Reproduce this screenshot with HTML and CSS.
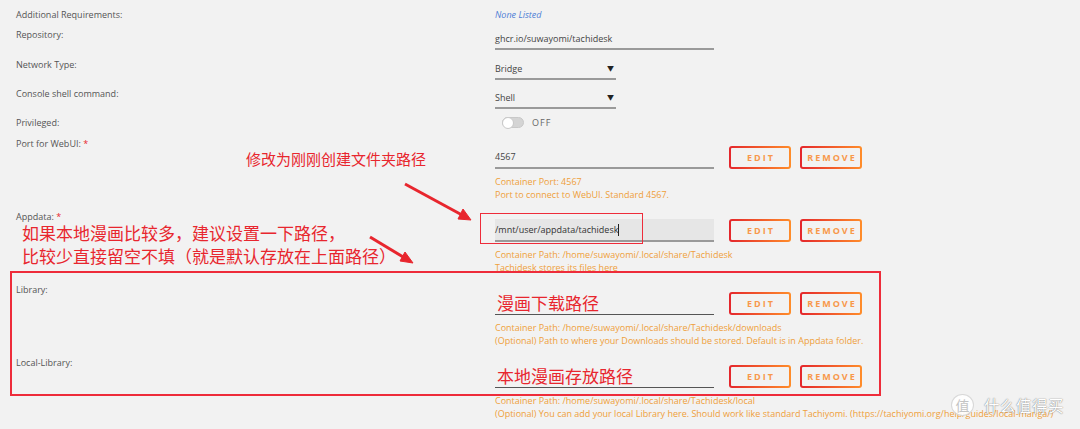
FILE: index.html
```html
<!DOCTYPE html>
<html lang="en">
  <head>
    <meta charset="UTF-8">
    <meta name="viewport" content="width=device-width, initial-scale=1.0">
    <title>Tachidesk - Edit Container</title>
    <link rel="stylesheet" href="styles.css">
  </head>
  <body>
    <div class="page">
      <div class="form">

        <div class="row row-text">
          <span class="label">Additional Requirements:</span>
          <span class="none">None Listed</span>
        </div>

        <div class="row row-input gap-8">
          <span class="label">Repository:</span>
          <div class="field"><span class="input wide">ghcr.io/suwayomi/tachidesk</span></div>
        </div>

        <div class="row row-input">
          <span class="label">Network Type:</span>
          <div class="field"><span class="input select">Bridge<i class="caret">&#9660;</i></span></div>
        </div>

        <div class="row row-input">
          <span class="label">Console shell command:</span>
          <div class="field"><span class="input select">Shell<i class="caret">&#9660;</i></span></div>
        </div>

        <div class="row row-text gap-8">
          <span class="label">Privileged:</span>
          <div class="field switch-field">
            <span class="switch"><span class="knob"></span></span>
            <span class="switch-text">OFF</span>
          </div>
        </div>

        <!-- paths / ports, each with edit + remove -->
        <div class="row row-config">
          <span class="label">Port for WebUI: <b class="req">*</b></span>
          <div class="field">
            <div class="line">
              <span class="input wide">4567</span>
              <button class="btn">EDIT</button>
              <button class="btn">REMOVE</button>
            </div>
            <p class="help">Container Port: 4567<br>Port to connect to WebUI. Standard 4567.</p>
          </div>
        </div>

        <div class="row row-config">
          <span class="label">Appdata: <b class="req">*</b></span>
          <div class="field">
            <div class="line">
              <span class="input wide focused">/mnt/user/appdata/tachidesk<span class="cursor"></span></span>
              <button class="btn">EDIT</button>
              <button class="btn">REMOVE</button>
            </div>
            <p class="help">Container Path: /home/suwayomi/.local/share/Tachidesk<br>Tachidesk stores its files here</p>
          </div>
        </div>

        <div class="row row-config">
          <span class="label">Library:</span>
          <div class="field">
            <div class="line">
              <span class="input wide dark"><span class="note">漫画下载路径</span></span>
              <button class="btn">EDIT</button>
              <button class="btn">REMOVE</button>
            </div>
            <p class="help">Container Path: /home/suwayomi/.local/share/Tachidesk/downloads<br>(Optional) Path to where your Downloads should be stored. Default is in Appdata folder.</p>
          </div>
        </div>

        <div class="row row-config">
          <span class="label">Local-Library:</span>
          <div class="field">
            <div class="line">
              <span class="input wide dark"><span class="note">本地漫画存放路径</span></span>
              <button class="btn">EDIT</button>
              <button class="btn">REMOVE</button>
            </div>
            <p class="help">Container Path: /home/suwayomi/.local/share/Tachidesk/local<br>(Optional) You can add your local Library here. Should work like standard Tachiyomi. (https://tachiyomi.org/help/guides/local-manga/)</p>
          </div>
        </div>

      </div>

      <!-- red notes drawn on top -->
      <p class="note note-top">修改为刚刚创建文件夹路径</p>
      <p class="note note-left">如果本地漫画比较多，建议设置一下路径，<br>比较少直接留空不填（就是默认存放在上面路径）</p>
      <div class="mark mark-appdata"></div>
      <div class="mark mark-library"></div>
      <svg class="arrows" width="1080" height="429" viewBox="0 0 1080 429">
        <g fill="#e8262e" stroke="#e8262e">
          <line x1="405" y1="184" x2="462" y2="215" stroke-width="3"/>
          <polygon points="471,220 458,219 463,209" stroke-width="1"/>
          <line x1="370" y1="237" x2="404" y2="257.5" stroke-width="3"/>
          <polygon points="413,263 400,261 405,252" stroke-width="1"/>
        </g>
      </svg>

      <div class="watermark">
        <span class="wm-logo">值</span>
        <span class="wm-text">什么值得买</span>
      </div>
    </div>
  </body>
</html>
```

FILE: styles.css
```css
body {
  margin: 0;
  background-color: #f2f2f2;
  font-family: "Open Sans", "Noto Sans CJK SC", sans-serif;
  font-size: 9px;
  color: #555;
}

.page {
  position: relative;
  width: 1080px;
  height: 429px;
  overflow: hidden;
}

.form {
  padding: 8px 0 0 16px;
}

.row {
  display: grid;
  grid-template-columns: 479px 1fr;
  margin-bottom: 7px;
}

.row.gap-8 {
  margin-bottom: 8px;
}

.label {
  line-height: 13px;
  height: 13px;
  white-space: nowrap;
}

.req {
  color: #e8262e;
  font-weight: normal;
}

.row-text .field,
.row-text .none {
  line-height: 13px;
}

.none {
  color: #4f7fd6;
  font-style: italic;
}

/* inputs */
.input {
  display: flex;
  align-items: center;
  box-sizing: border-box;
  height: 23px;
  border-bottom: 2px solid #9a9a9a;
  color: #444;
  white-space: nowrap;
}

.row-input .input {
  height: 22px;
}

.input.wide {
  width: 219px;
}

.input.select {
  width: 121px;
  justify-content: space-between;
}

.caret {
  font-style: normal;
  font-size: 7px;
  color: #222;
  padding-right: 2px;
}

.input.focused {
  background-color: #e6e6e6;
  color: #333;
}

.cursor {
  display: inline-block;
  width: 1px;
  height: 12px;
  background-color: #222;
}

.input.dark {
  border-bottom: 1px solid #555;
}

/* privileged switch */
.switch-field {
  display: flex;
  align-items: center;
  height: 13px;
  padding-left: 7px;
}

.switch {
  position: relative;
  width: 20px;
  height: 9px;
  border: 1px solid #c8c8c8;
  border-radius: 6px;
  background-color: #d4d4d4;
}

.knob {
  position: absolute;
  left: -1px;
  top: -1px;
  width: 10px;
  height: 10px;
  border-radius: 50%;
  background-color: #fff;
  border: 1px solid #c8c8c8;
}

.switch-text {
  margin-left: 8px;
  font-size: 9px;
  letter-spacing: 1px;
  color: #666;
}

/* config rows */
.row-config {
  margin-bottom: 9px;
  height: 64px;
}

.row-config .field {
  padding-top: 9px;
}

.line {
  display: flex;
  align-items: center;
}

.btn {
  box-sizing: border-box;
  width: 62px;
  height: 23px;
  margin-left: 9px;
  padding: 0 0 0 2px;
  border: 2px solid transparent;
  border-radius: 3px;
  background: linear-gradient(#f2f2f2, #f2f2f2) padding-box,
              linear-gradient(90deg, #e4262c, #ff8d2a) border-box;
  color: #f8984a;
  font-family: "Open Sans", sans-serif;
  font-size: 9px;
  font-weight: bold;
  letter-spacing: 2px;
}

.line .input + .btn {
  margin-left: 15px;
}

.help {
  margin: 6px 0 0;
  line-height: 13px;
  font-size: 9px;
  color: #efa03a;
  white-space: nowrap;
}

/* red notes */
.note {
  color: #e8262e;
  font-family: "Noto Sans CJK SC", sans-serif;
  font-size: 17px;
  margin: 0;
  white-space: nowrap;
}

.input .note {
  line-height: 20px;
  margin-left: 2px;
}

.note-top {
  position: absolute;
  left: 246px;
  top: 147px;
  font-size: 15px;
  line-height: 24px;
}

.note-left {
  position: absolute;
  left: 22px;
  top: 221px;
  line-height: 23px;
}

.mark {
  position: absolute;
  border: 2px solid #ee2c3a;
}

.mark-appdata {
  left: 480px;
  top: 213px;
  width: 161px;
  height: 29px;
  border-width: 1.5px;
}

.mark-library {
  left: 10px;
  top: 271px;
  width: 867px;
  height: 121px;
}

.arrows {
  position: absolute;
  left: 0;
  top: 0;
  pointer-events: none;
}

/* site badge */
.watermark {
  position: absolute;
  left: 951px;
  top: 394px;
  display: flex;
  align-items: center;
  color: #fff;
  font-family: "Noto Sans CJK SC", sans-serif;
  text-shadow: 0 0 1px rgba(0, 0, 0, 0.55), 0 0 2px rgba(0, 0, 0, 0.2);
}

.wm-logo {
  box-sizing: border-box;
  width: 23px;
  height: 22px;
  border-radius: 50%;
  border: 1px solid rgba(0, 0, 0, 0.15);
  background-color: rgba(255, 255, 255, 0.9);
  color: #c4c4c4;
  font-size: 14px;
  line-height: 20px;
  text-align: center;
  text-shadow: none;
}

.wm-text {
  margin-left: 10px;
  font-size: 15.5px;
  letter-spacing: 0.5px;
}
```
